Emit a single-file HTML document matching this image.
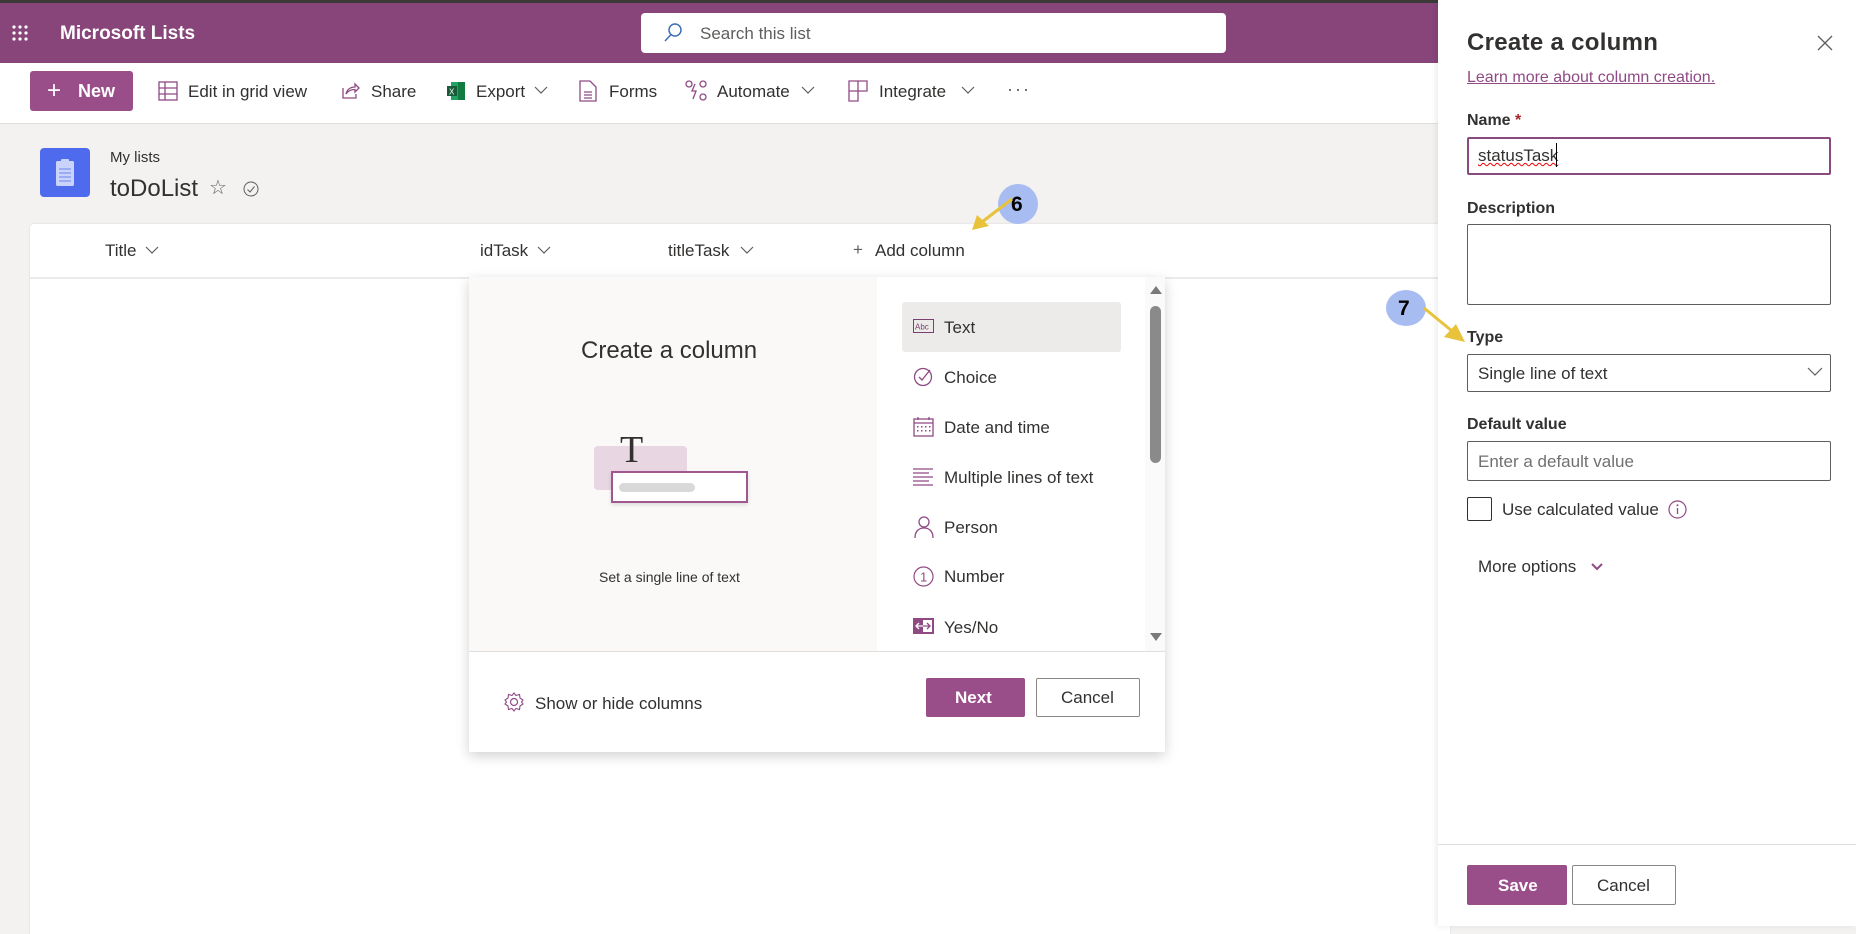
<!DOCTYPE html>
<html><head><meta charset="utf-8"><style>
*{box-sizing:border-box;margin:0;padding:0}
body{width:1856px;height:926px;position:relative;overflow:hidden;background:#f3f2f1;font-family:"Liberation Sans",sans-serif;color:#323130}
.a{position:absolute}
.t{position:absolute;white-space:nowrap;line-height:1}
.ci{font-size:17px;color:#323130}
</style></head><body>
<div class="a" style="left:0;top:0;width:1856px;height:3px;background:#3b3a39"></div>
<div class="a" style="left:0;top:3px;width:1438px;height:60px;background:#884579"></div>
<svg class="a" style="left:11px;top:24px" width="18" height="18"><g fill="#fff"><circle cx="3" cy="3" r="1.6"/><circle cx="9" cy="3" r="1.6"/><circle cx="15" cy="3" r="1.6"/><circle cx="3" cy="9" r="1.6"/><circle cx="9" cy="9" r="1.6"/><circle cx="15" cy="9" r="1.6"/><circle cx="3" cy="15" r="1.6"/><circle cx="9" cy="15" r="1.6"/><circle cx="15" cy="15" r="1.6"/></g></svg>
<div class="t" style="left:60px;top:24px;font-size:19px;font-weight:bold;color:#fff">Microsoft Lists</div>
<div class="a" style="left:641px;top:13px;width:585px;height:40px;background:#fff;border-radius:4px"></div>
<svg class="a" style="left:662px;top:22px" width="22" height="22"><circle cx="13" cy="8" r="6" fill="none" stroke="#3e6fb5" stroke-width="1.5"/><line x1="9" y1="12.5" x2="3" y2="19" stroke="#3e6fb5" stroke-width="1.5"/></svg>
<div class="t" style="left:700px;top:25px;font-size:17px;color:#605e5c">Search this list</div>

<div class="a" style="left:0;top:63px;width:1438px;height:61px;background:#fff;border-bottom:1px solid #e1dfdd"></div>
<div class="a" style="left:30px;top:71px;width:103px;height:40px;background:#994d89;border-radius:3px"></div>
<div class="t" style="left:47px;top:79px;font-size:24px;color:#fff;font-weight:300">+</div>
<div class="t" style="left:78px;top:82px;font-size:18px;color:#fff;font-weight:bold">New</div>
<svg class="a" style="left:158px;top:81px" width="20" height="20"><rect x="1" y="1" width="18" height="18" fill="none" stroke="#8f4a84" stroke-width="1.3"/><path d="M1 7H19M1 13H19M7 1V19" stroke="#8f4a84" stroke-width="1.3"/></svg>
<div class="t ci" style="left:188px;top:83px">Edit in grid view</div>
<svg class="a" style="left:340px;top:80px" width="20" height="20"><path d="M3 8V18H16V14" fill="none" stroke="#8f4a84" stroke-width="1.3"/><path d="M6 14C7 9 11 7 15 7V4L19 8L15 12V9.5C11 9.5 8 11 6 14Z" fill="none" stroke="#8f4a84" stroke-width="1.3"/></svg>
<div class="t ci" style="left:371px;top:83px">Share</div>
<svg class="a" style="left:446px;top:81px" width="20" height="20"><rect x="5" y="1" width="14" height="18" fill="#21a366"/><rect x="12" y="1" width="7" height="18" fill="#107c41"/><rect x="1" y="5" width="10" height="10" fill="#185c37"/><text x="3" y="13.5" font-size="8" fill="#fff" font-family="Liberation Sans">X</text></svg>
<div class="t ci" style="left:476px;top:83px">Export</div>
<svg class="a" style="left:534px;top:86px" width="14" height="9"><path d="M1 1L7 7L13 1" fill="none" stroke="#605e5c" stroke-width="1.2"/></svg>
<svg class="a" style="left:579px;top:80px" width="18" height="22"><path d="M1 1H11L17 7V21H1Z" fill="none" stroke="#8f4a84" stroke-width="1.3"/><path d="M5 12H13M5 15H13M5 18H13" stroke="#8f4a84" stroke-width="1.2"/></svg>
<div class="t ci" style="left:609px;top:83px">Forms</div>
<svg class="a" style="left:685px;top:80px" width="24" height="22"><circle cx="4" cy="4" r="3" fill="none" stroke="#8f4a84" stroke-width="1.3"/><circle cx="18" cy="4" r="3" fill="none" stroke="#8f4a84" stroke-width="1.3"/><circle cx="18" cy="17" r="3" fill="none" stroke="#8f4a84" stroke-width="1.3"/><path d="M10 4L7 11H11L8 19" fill="none" stroke="#8f4a84" stroke-width="1.3"/></svg>
<div class="t ci" style="left:717px;top:83px">Automate</div>
<svg class="a" style="left:801px;top:86px" width="14" height="9"><path d="M1 1L7 7L13 1" fill="none" stroke="#605e5c" stroke-width="1.2"/></svg>
<svg class="a" style="left:848px;top:80px" width="20" height="22"><path d="M1 1H19V11H10V21H1Z M1 11H10V1" fill="none" stroke="#8f4a84" stroke-width="1.3"/></svg>
<div class="t ci" style="left:879px;top:83px">Integrate</div>
<svg class="a" style="left:961px;top:86px" width="14" height="9"><path d="M1 1L7 7L13 1" fill="none" stroke="#605e5c" stroke-width="1.2"/></svg>
<div class="t" style="left:1007px;top:80px;font-size:18px;color:#605e5c;letter-spacing:2px">···</div>

<div class="a" style="left:40px;top:148px;width:50px;height:49px;background:#4f6bed;border-radius:4px"></div>
<svg class="a" style="left:55px;top:158px" width="20" height="30"><rect x="1" y="3" width="18" height="25" rx="1.5" fill="#c9d3fb"/><rect x="6" y="1" width="8" height="4" rx="1" fill="#c9d3fb"/><path d="M4 11H16M4 15H16M4 19H16M4 23H16" stroke="#7f95f0" stroke-width="1.3"/></svg>
<div class="t" style="left:110px;top:150px;font-size:15px;color:#323130">My lists</div>
<div class="t" style="left:110px;top:177px;font-size:24px;color:#323130">toDoList</div>
<div class="t" style="left:209px;top:178px;font-size:20px;color:#605e5c">☆</div>
<svg class="a" style="left:243px;top:181px" width="16" height="16"><circle cx="8" cy="8" r="7" fill="none" stroke="#605e5c" stroke-width="1"/><path d="M4.5 8.5L7 11L11.5 5.5" fill="none" stroke="#605e5c" stroke-width="1"/></svg>

<div class="a" style="left:30px;top:224px;width:1420px;height:710px;background:#fff;border-radius:4px 0 0 0;box-shadow:0 0 2px rgba(0,0,0,.12)"></div>
<div class="a" style="left:30px;top:277px;width:1420px;height:2px;background:#edebe9"></div>
<div class="t ci" style="left:105px;top:242px">Title</div>
<svg class="a" style="left:145px;top:246px" width="14" height="9"><path d="M1 1L7 7L13 1" fill="none" stroke="#605e5c" stroke-width="1.2"/></svg>
<div class="t ci" style="left:480px;top:242px">idTask</div>
<svg class="a" style="left:537px;top:246px" width="14" height="9"><path d="M1 1L7 7L13 1" fill="none" stroke="#605e5c" stroke-width="1.2"/></svg>
<div class="t ci" style="left:668px;top:242px">titleTask</div>
<svg class="a" style="left:740px;top:246px" width="14" height="9"><path d="M1 1L7 7L13 1" fill="none" stroke="#605e5c" stroke-width="1.2"/></svg>
<div class="t" style="left:853px;top:241px;font-size:17px;color:#605e5c">+</div>
<div class="t ci" style="left:875px;top:242px">Add column</div>

<!-- dialog -->
<div class="a" style="left:469px;top:277px;width:696px;height:475px;background:#fff;box-shadow:0 4px 12px rgba(0,0,0,.18)"></div>
<div class="a" style="left:469px;top:277px;width:408px;height:374px;background:#faf9f8"></div>
<div class="a" style="left:469px;top:651px;width:696px;height:1px;background:#e1dfdd"></div>
<div class="t" style="left:581px;top:339px;font-size:24px;color:#323130">Create a column</div>
<div class="a" style="left:594px;top:446px;width:93px;height:44px;background:#e8d6e3;border-radius:4px"></div>
<div class="t" style="left:620px;top:431px;font-size:38px;font-family:'Liberation Serif',serif;color:#323130">T</div>
<div class="a" style="left:611px;top:471px;width:137px;height:32px;background:#fff;border:2px solid #a0578f;box-shadow:0 2px 4px rgba(0,0,0,.12)"></div>
<div class="a" style="left:619px;top:483px;width:76px;height:9px;background:#d9d9d9;border-radius:5px"></div>
<div class="t" style="left:599px;top:570px;font-size:14px;color:#323130">Set a single line of text</div>

<div class="a" style="left:902px;top:302px;width:219px;height:50px;background:#edebe9;border-radius:3px"></div>
<svg class="a" style="left:913px;top:319px" width="21" height="15"><rect x="0.5" y="0.5" width="20" height="13" fill="none" stroke="#7a3f70"/><text x="2" y="10.5" font-size="8" fill="#7a3f70" font-family="Liberation Sans">Abc</text></svg>
<div class="t ci" style="left:944px;top:319px">Text</div>
<svg class="a" style="left:913px;top:367px" width="20" height="20"><circle cx="10" cy="10" r="8.5" fill="none" stroke="#8f4a84" stroke-width="1.3"/><path d="M6 10L9 13L17 3" fill="none" stroke="#8f4a84" stroke-width="1.3"/></svg>
<div class="t ci" style="left:944px;top:369px">Choice</div>
<svg class="a" style="left:913px;top:417px" width="21" height="20"><rect x="1" y="2" width="19" height="17" fill="none" stroke="#8f4a84" stroke-width="1.3"/><path d="M1 6H20M5 0V3M16 0V3" stroke="#8f4a84" stroke-width="1.3"/><g fill="#8f4a84"><rect x="4" y="9" width="1.5" height="1.5"/><rect x="8" y="9" width="1.5" height="1.5"/><rect x="12" y="9" width="1.5" height="1.5"/><rect x="16" y="9" width="1.5" height="1.5"/><rect x="4" y="13" width="1.5" height="1.5"/><rect x="8" y="13" width="1.5" height="1.5"/><rect x="12" y="13" width="1.5" height="1.5"/><rect x="16" y="13" width="1.5" height="1.5"/></g></svg>
<div class="t ci" style="left:944px;top:419px">Date and time</div>
<svg class="a" style="left:913px;top:468px" width="21" height="19"><path d="M0 1H20M0 5H16M0 9H20M0 13H16M0 17H20" stroke="#8f4a84" stroke-width="1.2"/></svg>
<div class="t ci" style="left:944px;top:469px">Multiple lines of text</div>
<svg class="a" style="left:914px;top:516px" width="20" height="22"><circle cx="10" cy="6" r="5" fill="none" stroke="#8f4a84" stroke-width="1.3"/><path d="M1 22C1 15 5 12 10 12C15 12 19 15 19 22" fill="none" stroke="#8f4a84" stroke-width="1.3"/></svg>
<div class="t ci" style="left:944px;top:519px">Person</div>
<svg class="a" style="left:913px;top:566px" width="21" height="21"><circle cx="10.5" cy="10.5" r="9.5" fill="none" stroke="#8f4a84" stroke-width="1.2"/><text x="7" y="15.5" font-size="13" fill="#8f4a84" font-family="Liberation Sans">1</text></svg>
<div class="t ci" style="left:944px;top:568px">Number</div>
<svg class="a" style="left:913px;top:618px" width="21" height="16"><rect x="0" y="0" width="21" height="16" fill="#8f4a84"/><rect x="10" y="2" width="9" height="12" fill="#fff"/><path d="M3 8H17M6 5L3 8L6 11M14 5L17 8L14 11" fill="none" stroke="#fff" stroke-width="1.3"/><path d="M10 8H17M14 5L17 8L14 11" fill="none" stroke="#8f4a84" stroke-width="1.3"/></svg>
<div class="t ci" style="left:944px;top:619px">Yes/No</div>

<div class="a" style="left:1145px;top:277px;width:20px;height:374px;background:#fafafa"></div>
<svg class="a" style="left:1149px;top:285px" width="14" height="10"><path d="M1 9L7 1L13 9Z" fill="#7a7a7a"/></svg>
<div class="a" style="left:1150px;top:306px;width:11px;height:157px;background:#8a8a8a;border-radius:6px"></div>
<svg class="a" style="left:1149px;top:632px" width="14" height="10"><path d="M1 1L7 9L13 1Z" fill="#7a7a7a"/></svg>

<svg class="a" style="left:503px;top:691px" width="22" height="22"><circle cx="11" cy="11" r="3.5" fill="none" stroke="#8f4a84" stroke-width="1.2"/><path d="M11 2L13 4.5L16.5 3.5L17 7L20 9L18.5 11L20 13L17 15L16.5 18.5L13 17.5L11 20L9 17.5L5.5 18.5L5 15L2 13L3.5 11L2 9L5 7L5.5 3.5L9 4.5Z" fill="none" stroke="#8f4a84" stroke-width="1.1"/></svg>
<div class="t ci" style="left:535px;top:695px">Show or hide columns</div>
<div class="a" style="left:926px;top:678px;width:99px;height:39px;background:#994d89;border-radius:2px"></div>
<div class="t" style="left:955px;top:689px;font-size:17px;color:#fff;font-weight:bold">Next</div>
<div class="a" style="left:1036px;top:678px;width:104px;height:39px;border:1px solid #8a8886;border-radius:2px;background:#fff"></div>
<div class="t ci" style="left:1061px;top:689px">Cancel</div>

<!-- badge 6 -->
<div class="a" style="left:998px;top:184px;width:40px;height:40px;border-radius:50%;background:#a7bcf0"></div>
<div class="t" style="left:1011px;top:194px;font-size:21px;font-weight:bold;color:#000">6</div>
<svg class="a" style="left:960px;top:195px" width="60" height="45"><line x1="52" y1="4" x2="22" y2="27" stroke="#e8c23a" stroke-width="3"/><path d="M12 35L17 20L29 31Z" fill="#e8c23a"/></svg>

<!-- right panel -->
<div class="a" style="left:1438px;top:0;width:418px;height:926px;background:#fff;box-shadow:-2px 0 6px rgba(0,0,0,.08)"></div>
<div class="t" style="left:1467px;top:31px;font-size:24px;font-weight:bold;color:#323130;letter-spacing:.3px">Create a column</div>
<svg class="a" style="left:1817px;top:35px" width="16" height="16"><path d="M1 1L15 15M15 1L1 15" stroke="#605e5c" stroke-width="1.3"/></svg>
<div class="t" style="left:1467px;top:70px;font-size:16px;color:#8f4a84;text-decoration:underline">Learn more about column creation.</div>
<div class="t" style="left:1467px;top:113px;font-size:16px;font-weight:bold;color:#323130">Name <span style="color:#a4262c">*</span></div>
<div class="a" style="left:1467px;top:137px;width:364px;height:38px;border:2px solid #8a4a80;border-radius:2px"></div>
<div class="t" style="left:1478px;top:147px;font-size:17px;color:#323130;text-decoration:underline wavy #e00;text-decoration-thickness:1px">statusTask</div>
<div class="a" style="left:1556px;top:143px;width:1px;height:24px;background:#000"></div>
<div class="t" style="left:1467px;top:201px;font-size:16px;font-weight:bold;color:#323130">Description</div>
<div class="a" style="left:1467px;top:224px;width:364px;height:81px;border:1px solid #605e5c;border-radius:2px"></div>
<div class="t" style="left:1467px;top:330px;font-size:16px;font-weight:bold;color:#323130">Type</div>
<div class="a" style="left:1467px;top:354px;width:364px;height:38px;border:1px solid #605e5c;border-radius:2px"></div>
<div class="t" style="left:1478px;top:365px;font-size:17px;color:#323130">Single line of text</div>
<svg class="a" style="left:1807px;top:367px" width="16" height="10"><path d="M1 1L8 8L15 1" fill="none" stroke="#605e5c" stroke-width="1.2"/></svg>
<div class="t" style="left:1467px;top:417px;font-size:16px;font-weight:bold;color:#323130">Default value</div>
<div class="a" style="left:1467px;top:441px;width:364px;height:40px;border:1px solid #605e5c;border-radius:2px"></div>
<div class="t" style="left:1478px;top:453px;font-size:17px;color:#707070">Enter a default value</div>
<div class="a" style="left:1467px;top:497px;width:25px;height:24px;border:1px solid #323130;border-radius:2px"></div>
<div class="t" style="left:1502px;top:501px;font-size:17px;color:#323130">Use calculated value</div>
<svg class="a" style="left:1668px;top:500px" width="19" height="19"><circle cx="9.5" cy="9.5" r="8.5" fill="none" stroke="#8f4a84" stroke-width="1.2"/><path d="M9.5 8V14" stroke="#8f4a84" stroke-width="1.3"/><circle cx="9.5" cy="5.3" r="1" fill="#8f4a84"/></svg>
<div class="t" style="left:1478px;top:558px;font-size:17px;color:#323130">More options</div>
<svg class="a" style="left:1590px;top:562px" width="14" height="9"><path d="M2 2L7 7L12 2" fill="none" stroke="#8f4a84" stroke-width="2"/></svg>
<div class="a" style="left:1438px;top:844px;width:418px;height:1px;background:#e1dfdd"></div>
<div class="a" style="left:1467px;top:865px;width:100px;height:40px;background:#994d89;border-radius:2px"></div>
<div class="t" style="left:1498px;top:877px;font-size:17px;color:#fff;font-weight:bold">Save</div>
<div class="a" style="left:1572px;top:865px;width:104px;height:40px;border:1px solid #8a8886;border-radius:2px"></div>
<div class="t ci" style="left:1597px;top:877px">Cancel</div>

<!-- badge 7 -->
<div class="a" style="left:1386px;top:290px;width:40px;height:36px;border-radius:50%;background:#a7bcf0"></div>
<div class="t" style="left:1398px;top:298px;font-size:21px;font-weight:bold;color:#000">7</div>
<svg class="a" style="left:1420px;top:305px" width="50" height="42"><line x1="4" y1="3" x2="32" y2="26" stroke="#e8c23a" stroke-width="3"/><path d="M45 37L24 32L36 19Z" fill="#e8c23a"/></svg>
</body></html>
